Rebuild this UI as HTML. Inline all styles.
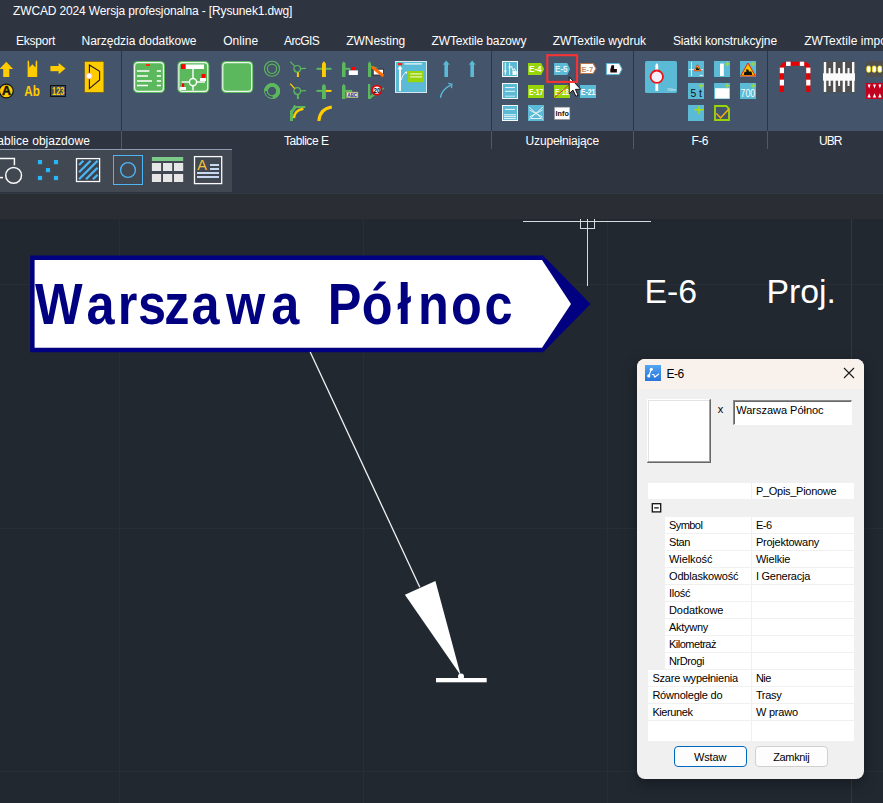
<!DOCTYPE html>
<html lang="pl">
<head>
<meta charset="utf-8">
<title>ZWCAD 2024 Wersja profesjonalna - [Rysunek1.dwg]</title>
<style>
html,body{margin:0;padding:0;}
body{width:883px;height:803px;overflow:hidden;position:relative;background:#212830;font-family:"Liberation Sans",sans-serif;}
.abs{position:absolute;}
.tx{position:absolute;white-space:pre;font-family:"Liberation Sans",sans-serif;}
#titlebar{left:0;top:0;width:883px;height:51px;background:#2f3540;}
#ribbon{left:0;top:51px;width:883px;height:80px;background:#44546a;}
#labels{left:0;top:131px;width:883px;height:63px;background:#2f3540;border-bottom:1px solid #303843;box-sizing:border-box;}
#strip{left:0;top:194px;width:883px;height:25px;background:#2a2d33;}
#toolbar{left:0;top:149px;width:232px;height:43px;background:#414852;border-top:1px solid #8d9cb2;box-sizing:border-box;}
.sep{position:absolute;top:51px;width:1px;height:98px;background:#2f3540;}
.sep2{position:absolute;top:131px;width:1px;height:18px;background:#4a5a70;}
#canvas{left:0;top:219px;width:883px;height:584px;background:#212830;overflow:hidden;}
#dialog{left:637px;top:359px;width:227px;height:420px;background:#f0f0f0;border-radius:8px;overflow:hidden;box-shadow:0 4px 14px rgba(0,0,0,.35);}
#dtitle{left:0;top:0;width:227px;height:30px;background:#f9f2ec;}
.row{position:absolute;background:#fff;height:16px;}
.btn{position:absolute;box-sizing:border-box;border-radius:4px;background:#fdfdfd;}
</style>
</head>
<body>
<div id="titlebar" class="abs"></div>
<div id="ribbon" class="abs"></div>
<div id="labels" class="abs"></div>
<div id="strip" class="abs"></div>
<div class="sep" style="left:121px"></div><div class="sep" style="left:491px"></div><div class="sep" style="left:633px"></div><div class="sep" style="left:767px"></div>
<div class="sep2" style="left:121px"></div><div class="sep2" style="left:491px"></div><div class="sep2" style="left:633px"></div><div class="sep2" style="left:767px"></div>
<div id="toolbar" class="abs"></div>
<div id="canvas" class="abs">
<svg class="abs" style="left:0;top:0" width="883" height="584" viewBox="0 219 883 584">
<g stroke="#272e37" stroke-width="1" shape-rendering="crispEdges">
<line x1="119.5" y1="218" x2="119.5" y2="803"/><line x1="363.5" y1="218" x2="363.5" y2="803"/><line x1="607.5" y1="218" x2="607.5" y2="803"/>
<line x1="0" y1="284.5" x2="883" y2="284.5"/><line x1="0" y1="528.5" x2="883" y2="528.5"/><line x1="0" y1="771.5" x2="883" y2="771.5"/>
<line x1="851.5" y1="218" x2="851.5" y2="803" stroke="#303844"/>
</g>
<g stroke="#d8dadd" stroke-width="1" fill="none" shape-rendering="crispEdges">
<line x1="523" y1="221.5" x2="651" y2="221.5"/><line x1="587.5" y1="218" x2="587.5" y2="285.5"/>
<rect x="580.5" y="214.5" width="14" height="14"/>
</g>
<polygon points="30.2,255.5 543,255.5 590.6,303.9 543,352.2 30.2,352.2" fill="#000080"/>
<polygon points="34.6,260.1 542,260.1 571,303.9 542,347.8 34.6,347.8" fill="#ffffff"/>
<text transform="scale(0.88,1)" x="39.8 98.2 133.8 156.7 186.8 217.7 256.7 308.1 358.0 372.4 411.1 451.4 475.1 512.4 550.7" y="324" font-family="Liberation Sans, sans-serif" font-weight="700" font-size="57.3" fill="#000080">Warszawa Północ</text>
<line x1="310.2" y1="352" x2="419.8" y2="587.2" stroke="#f2f2f2" stroke-width="1.3"/>
<polygon points="404.9,594.8 435.4,580.9 460.8,675.6" fill="#ffffff"/>
<circle cx="461" cy="676.4" r="3" fill="#ffffff"/>
<rect x="436" y="678" width="50.7" height="4.3" fill="#ffffff"/>

</svg>
</div>
<svg class="abs" style="left:0;top:0" width="883" height="220" viewBox="0 0 883 220">
<defs>
<g id="gsign"><rect x="0" y="0" width="32" height="32" rx="4.5" fill="#5cb85c"/><rect x="1.6" y="1.6" width="28.8" height="28.8" rx="3.4" fill="none" stroke="#eef8ee" stroke-width="1.2"/></g>
<g id="plus" stroke="#aadc10" stroke-width="1.25"><line x1="-2.5" y1="0" x2="2.5" y2="0"/><line x1="0" y1="-2.5" x2="0" y2="2.5"/></g>
</defs>
<!-- ===== Tablice objazdowe ===== -->
<g fill="#ffcc00">
<polygon points="6.3,61.7 13.1,69 9.3,69 9.3,77 3.2,77 3.2,69 -0.5,69"/>
<polygon points="27.6,60.7 29,60.7 29.4,67.6 32.4,64.3 35.4,67.6 35.8,60.7 37.2,60.7 37.2,77 27.6,77"/>
<rect x="50.4" y="66" width="9" height="5.2"/><polygon points="58.6,63 65.5,68.6 58.6,74.2"/>
<rect x="84.6" y="61.5" width="19.3" height="30.8" stroke="#6b5a10" stroke-width="0.6"/>
</g>
<polygon points="89.4,65 99.6,71.2 99.6,80 89.4,88.6" fill="none" stroke="#1a1a1a" stroke-width="1.1"/>
<circle cx="89.2" cy="76" r="2.9" fill="#fff" stroke="#ffb090" stroke-width="0.7"/>
<circle cx="6.3" cy="91" r="6.9" fill="#ffcc00" stroke="#111" stroke-width="1.2"/>
<text x="6.5" y="95.3" font-family="Liberation Sans, sans-serif" font-size="12.4" font-weight="700" fill="#111" stroke="#111" stroke-width="0.5" text-anchor="middle">A</text>
<text x="24.3" y="96.2" font-family="Liberation Sans, sans-serif" font-size="15" font-weight="700" fill="#ffcc00" textLength="15.6" lengthAdjust="spacingAndGlyphs">Ab</text>
<rect x="50.5" y="85.5" width="15" height="11" fill="#3d4a60" stroke="#111" stroke-width="1"/>
<text x="52" y="95.3" font-family="Liberation Sans, sans-serif" font-size="10.6" font-weight="700" fill="#ffcc00" textLength="12.4" lengthAdjust="spacingAndGlyphs">123</text>
<!-- ===== Tablice E ===== -->
<use href="#gsign" x="133" y="61"/>
<g stroke="#fff" stroke-width="1.5"><line x1="137" y1="71" x2="149.3" y2="71"/><line x1="137" y1="76" x2="148" y2="76"/><line x1="137" y1="81" x2="152" y2="81"/><line x1="137" y1="85.5" x2="148" y2="85.5"/>
<line x1="156.8" y1="71" x2="161" y2="71"/><line x1="156.8" y1="76" x2="161" y2="76"/><line x1="156.8" y1="81" x2="161" y2="81"/><line x1="156.8" y1="85.5" x2="161" y2="85.5"/></g>
<rect x="146" y="64" width="4" height="2" rx="0.6" fill="#ff2a00"/>
<use href="#gsign" x="177.3" y="61"/>
<rect x="186" y="64.5" width="18" height="4.5" fill="#fff"/><rect x="181" y="64.2" width="4.2" height="4.8" fill="#f00"/>
<g stroke="#fff" stroke-width="1.4" fill="none"><line x1="193" y1="69" x2="193" y2="78.3"/><line x1="193" y1="86" x2="193" y2="90.5"/><line x1="181.5" y1="82" x2="189" y2="82"/><line x1="197" y1="82" x2="205" y2="82"/><circle cx="193" cy="82.1" r="3.6"/></g>
<rect x="201.6" y="74" width="4" height="4" fill="#f00"/><rect x="200" y="78" width="6" height="3" fill="#fff"/>
<rect x="182" y="83.4" width="2.2" height="3.6" fill="#f00"/><rect x="180" y="87" width="6" height="3" fill="#fff"/>
<use href="#gsign" x="221.2" y="61"/>
<g fill="none" stroke="#5cb85c">
<circle cx="272" cy="68.8" r="7.5" stroke-width="1.1"/><circle cx="272" cy="68.8" r="4.7" stroke-width="1.1"/>
<circle cx="272.1" cy="91" r="7.5" stroke-width="1"/><circle cx="272.1" cy="91" r="4.7" stroke-width="1.1"/><path d="M266,91 A6.1,6.1 0 1 1 272.6,97.1" stroke-width="3.8"/>
</g>
<!-- mini roundabouts -->
<g fill="none" stroke="#5cb85c" stroke-width="1.2">
<circle cx="297.2" cy="68.8" r="3.3"/><line x1="294.8" y1="66.4" x2="290.2" y2="61.6"/><line x1="300.5" y1="68.7" x2="306" y2="68.4"/>
<circle cx="297.2" cy="91" r="3.3"/><line x1="300.5" y1="90.9" x2="306" y2="90.6"/>
</g>
<line x1="297.9" y1="72.3" x2="297.9" y2="77" stroke="#ffcc00" stroke-width="2"/>
<line x1="294.8" y1="88.6" x2="290.2" y2="83.8" stroke="#ffcc00" stroke-width="1.3"/>
<line x1="297.9" y1="94.5" x2="297.9" y2="99" stroke="#5cb85c" stroke-width="2"/>
<path d="M295.2,70.5 l1.2,1.2 M294.2,69 l2.2,2.2" stroke="#5cb85c" stroke-width="0.6"/>
<path d="M295.2,92.7 l1.2,1.2 M294.2,91.2 l2.2,2.2" stroke="#5cb85c" stroke-width="0.6"/>
<!-- curve icons -->
<polygon points="290,121 290,111 292.6,108.2 294,105 295.3,105 295.3,105.9 305.4,105.9 305.4,107.9 296.2,107.9 293,112.6 293,121" fill="#5cb85c"/>
<path d="M293.9,118.2 Q294.4,110.4 303.4,108.8" fill="none" stroke="#ffcc00" stroke-width="2.4"/>
<path d="M318.9,121 Q319.6,109 331.8,107.1" fill="none" stroke="#ffcc00" stroke-width="3"/>
<!-- crosses -->
<line x1="316.5" y1="68.8" x2="331.5" y2="68.8" stroke="#5cb85c" stroke-width="2"/>
<polygon points="322,63.4 323.95,61.3 325.9,63.4 325.9,77 322,77" fill="#ffcc00"/>
<line x1="316.5" y1="90.9" x2="322.5" y2="90.9" stroke="#5cb85c" stroke-width="2"/>
<line x1="325.5" y1="90.9" x2="331.5" y2="90.9" stroke="#ffcc00" stroke-width="2"/>
<polygon points="322,85.9 323.95,83.8 325.9,85.9 325.9,99 322,99" fill="#5cb85c"/>
<!-- T icons -->
<polygon points="342,63.4 343.75,61.3 345.5,63.4 345.5,77 342,77" fill="#5cb85c"/>
<line x1="345" y1="68.8" x2="350.3" y2="68.8" stroke="#5cb85c" stroke-width="2"/>
<rect x="351.3" y="67" width="4.4" height="3.3" fill="#f00"/><rect x="348.8" y="70.4" width="9.1" height="4.6" fill="#fff"/>
<polygon points="342,85.9 343.75,83.8 345.5,85.9 345.5,99 342,99" fill="#5cb85c"/>
<line x1="345" y1="90.9" x2="352" y2="90.9" stroke="#5cb85c" stroke-width="2"/>
<rect x="346.6" y="92.1" width="11.3" height="5.6" fill="#e6e2a0" stroke="#a8a870" stroke-width="0.6"/>
<text x="347.6" y="97" font-family="Liberation Sans, sans-serif" font-size="5.6" font-weight="700" fill="#1428c8" textLength="9.4" lengthAdjust="spacingAndGlyphs">ABC</text>
<polygon points="368,63.4 369.5,61.3 371,63.4 371,77 368,77" fill="#5cb85c"/>
<line x1="371" y1="66" x2="378" y2="68.6" stroke="#5cb85c" stroke-width="1.1"/>
<rect x="373.2" y="69.2" width="10.2" height="5.8" fill="#fff" stroke="#222" stroke-width="0.8"/>
<line x1="371.9" y1="66.9" x2="383.5" y2="76" stroke="#ff6a00" stroke-width="3"/>
<polygon points="368,84 370.2,84 370.2,95.8 372.6,93.8 373.2,94.8 370.2,99 368,99" fill="#5cb85c"/>
<line x1="369.6" y1="98.6" x2="384" y2="88" stroke="#5cb85c" stroke-width="1.2"/>
<circle cx="376.9" cy="90.1" r="4.55" fill="#fff" stroke="#e80000" stroke-width="1.8"/>
<text x="373.5" y="92.5" font-family="Liberation Sans, sans-serif" font-size="6.6" font-weight="700" fill="#000" textLength="6.9" lengthAdjust="spacingAndGlyphs">20</text>
<!-- big blue icon -->
<rect x="395.5" y="61.5" width="31" height="31" fill="#5bbad5" stroke="#d4e8ef" stroke-width="1"/>
<rect x="398" y="63" width="4.2" height="2.2" fill="#f20"/>
<line x1="404.3" y1="63.9" x2="422" y2="63.9" stroke="#fff" stroke-width="1.1"/>
<line x1="400" y1="68" x2="400" y2="91" stroke="#fff" stroke-width="2"/><polygon points="400,65.4 402.5,69.2 397.5,69.2" fill="#fff"/>
<path d="M401.2,80 Q402,74.5 406,72.3" fill="none" stroke="#fff" stroke-width="0.8"/><polygon points="407.2,71.4 406.6,74 404.6,72" fill="#fff"/>
<rect x="408" y="71" width="16" height="11.2" fill="#98d40a"/>
<line x1="410.2" y1="73.9" x2="422" y2="73.9" stroke="#eaf6c8" stroke-width="1.2"/><line x1="410.2" y1="76.9" x2="422" y2="76.9" stroke="#eaf6c8" stroke-width="1.2"/>
<!-- blue arrows -->
<g fill="#5bbad5">
<polygon points="446.2,60.6 449.7,64.8 448,64.6 448,77 444.4,77 444.4,64.6 442.7,64.8"/>
<polygon points="472.2,60.6 475.7,64.8 474,64.6 474,77 470.4,77 470.4,64.6 468.7,64.8"/>
</g>
<path d="M440.4,97.8 Q441.5,89.5 451,84.8" fill="none" stroke="#5bbad5" stroke-width="1.3"/>
<path d="M448.2,83.4 L452,84.2 L451.4,88.2" fill="none" stroke="#5bbad5" stroke-width="1.2"/>
<!-- ===== Uzupełniające ===== -->
<g fill="#5bbad5" stroke="#f4fafc" stroke-width="1">
<rect x="502.5" y="61.5" width="15" height="15"/><rect x="502.5" y="83.5" width="15" height="15"/><rect x="502.5" y="105.5" width="15" height="15"/>
</g>
<g stroke="#fff" stroke-width="0.9" fill="none">
<line x1="505.3" y1="63" x2="505.3" y2="75"/><line x1="509.6" y1="63" x2="509.6" y2="75"/><path d="M511.5,66 L513,70.5 L514.5,68.5 L516.5,73.5"/>
<line x1="505" y1="87.6" x2="515" y2="87.6"/><line x1="505" y1="91.3" x2="515" y2="91.3"/><line x1="505" y1="96.2" x2="515" y2="96.2" stroke-opacity="0.75"/>
<line x1="505" y1="109.4" x2="515" y2="109.4"/><line x1="504" y1="114.8" x2="516" y2="114.8"/><line x1="504" y1="116.7" x2="516" y2="116.7"/><line x1="504" y1="118.6" x2="516" y2="118.6"/>
</g>
<rect x="504.5" y="70" width="1.8" height="2.4" fill="#fff"/><rect x="508.7" y="66" width="1.8" height="2.4" fill="#fff"/><rect x="512.5" y="71" width="4" height="4" fill="#fff"/>
<polygon points="528,63 541.2,63 544.2,69 541.2,75 528,75" fill="#98d40a"/>
<text x="529" y="72" font-family="Liberation Sans, sans-serif" font-size="8.2" font-weight="700" fill="#fff" textLength="12.6" lengthAdjust="spacingAndGlyphs">E-4</text>
<rect x="528" y="85" width="16" height="13" fill="#98d40a"/>
<text x="529" y="94.6" font-family="Liberation Sans, sans-serif" font-size="8.2" font-weight="700" fill="#fff" textLength="14.2" lengthAdjust="spacingAndGlyphs">E-17</text>
<rect x="528" y="105" width="16" height="16" fill="#5bbad5"/>
<g stroke="#eef8fb" stroke-width="0.9" fill="none"><path d="M529,107 L543,119.5 M543,107 L529,119.5 M529.5,110 L542.5,117 M542.5,110 L529.5,117 M531,118.5 H541"/></g>
<polygon points="554,63 567.2,63 570.2,69 567.2,75 554,75" fill="#5bbad5"/>
<text x="555" y="72" font-family="Liberation Sans, sans-serif" font-size="8.2" font-weight="700" fill="#e4f3f8" textLength="12.6" lengthAdjust="spacingAndGlyphs">E-5</text>
<rect x="554" y="85" width="16" height="13" fill="#98d40a"/>
<text x="555" y="94.6" font-family="Liberation Sans, sans-serif" font-size="8.2" font-weight="700" fill="#fff" textLength="14.2" lengthAdjust="spacingAndGlyphs">E-18</text>
<line x1="554.5" y1="97.6" x2="568.5" y2="85.4" stroke="#f21a1a" stroke-width="0.9"/>
<rect x="554.6" y="107.2" width="15.2" height="12.2" fill="#fff" stroke="#9a9a9a" stroke-width="0.6"/>
<text x="555.6" y="116.4" font-family="Liberation Sans, sans-serif" font-size="8" font-weight="700" fill="#111" textLength="13.2" lengthAdjust="spacingAndGlyphs">Info</text>
<polygon points="580.5,63.5 593.2,63.5 596,68.5 593.2,73.5 580.5,73.5" fill="#fff" stroke="#b8764a" stroke-width="1.1"/>
<text x="581.6" y="71.6" font-family="Liberation Sans, sans-serif" font-size="8" font-weight="700" fill="#c08a60" textLength="11.6" lengthAdjust="spacingAndGlyphs">E-7</text>
<rect x="580" y="85" width="16" height="13" fill="#5bbad5"/>
<text x="580.8" y="94.6" font-family="Liberation Sans, sans-serif" font-size="8.2" font-weight="700" fill="#fff" textLength="14.6" lengthAdjust="spacingAndGlyphs">E-21</text>
<polygon points="606.4,63.5 619.2,63.5 622,69 619.2,74.6 606.4,74.6" fill="#fff" stroke="#5bbad5" stroke-width="1"/>
<path d="M611.5,65.2 h2.6 v3.8 h2.8 v3.6 h-6.6 v-3 z" fill="#1a0808"/>
<path d="M569.2,76.9 L569.2,93.7 L573,90.1 L575.9,96.3 L578.1,95.3 L575.4,89.4 L580.7,89.2 Z" fill="#fff" stroke="#111" stroke-width="1" stroke-linejoin="miter"/>
<rect x="547.3" y="55.2" width="29.8" height="26.7" fill="none" stroke="#f93234" stroke-width="2.1"/>
<!-- ===== F-6 ===== -->
<rect x="645" y="61" width="32" height="32" rx="1.5" fill="#5bbad5"/>
<polygon points="655.4,65 656.8,63 658.2,65 658.2,91 655.4,91" fill="#fff"/>
<circle cx="656.8" cy="76.7" r="6.2" fill="#f4f0fb" stroke="#ee1414" stroke-width="1.8"/>
<text x="667" y="91" font-family="Liberation Sans, sans-serif" font-size="3.6" fill="#eaf6fa" textLength="8.6" lengthAdjust="spacingAndGlyphs">700m</text>
<g fill="#5bbad5">
<rect x="688" y="61" width="16" height="16"/><rect x="714" y="61" width="16" height="16"/><rect x="740" y="61" width="16" height="16"/>
<rect x="688" y="83" width="16" height="16"/><rect x="714" y="83" width="16" height="16"/><rect x="740" y="83" width="16" height="16"/>
<rect x="688" y="105" width="16" height="16"/>
</g>
<g stroke="#fff" stroke-width="0.8"><line x1="691.5" y1="62" x2="691.5" y2="76"/><line x1="689" y1="69.6" x2="703" y2="69.6"/><line x1="699.5" y1="75.4" x2="703" y2="75.4"/></g>
<polygon points="697.5,64.6 701,70.8 694,70.8" fill="#ffc400" stroke="#ee2200" stroke-width="0.7"/><path d="M695.8,70 h3.6 v-1.6 h-1.6 v-1.2 h-1.2 z" fill="#111"/>
<rect x="720" y="63.6" width="3.8" height="12.4" fill="#fff"/>
<use href="#plus" x="727.3" y="64"/>
<polygon points="748,63 755.4,76 740.6,76" fill="#ffc400" stroke="#ee2200" stroke-width="1"/>
<path d="M743.6,75 h8.8 l-1,-3.6 h-2.4 l-0.8,-2 h-2.4 l0.8,2.4 h-2 z" fill="#111"/>
<use href="#plus" x="753.3" y="64"/>
<text x="690.4" y="97" font-family="Liberation Sans, sans-serif" font-size="11" fill="#111" textLength="11.4" lengthAdjust="spacingAndGlyphs">5 t</text>
<use href="#plus" x="701.3" y="85.8"/>
<rect x="715" y="88.2" width="14.4" height="10.3" fill="#fff"/>
<use href="#plus" x="727.3" y="85.8"/>
<text x="740.6" y="97.2" font-family="Liberation Sans, sans-serif" font-size="10.6" fill="#fff" textLength="14.6" lengthAdjust="spacingAndGlyphs">700</text>
<use href="#plus" x="753.3" y="85.8"/>
<g stroke="#aadc10" stroke-width="1.6"><line x1="694.6" y1="109.7" x2="703.4" y2="109.7"/><line x1="699" y1="106" x2="699" y2="114"/></g>
<polygon points="715,106 726.4,106 729,108.8 729,120 715,120" fill="none" stroke="#98d40a" stroke-width="1.9"/>
<polyline points="716.4,113.4 720.6,118 728.6,109.2" fill="none" stroke="#ffb400" stroke-width="1.4"/>
<!-- ===== UBR ===== -->
<path d="M781.9,92 V69.2 Q781.9,63.8 787.3,63.8 H802.9 Q808.3,63.8 808.3,69.2 V92" fill="none" stroke="#e60000" stroke-width="4.1"/>
<g fill="#fff">
<rect x="779.8" y="67.6" width="4.2" height="5.6"/><rect x="779.8" y="79.7" width="4.2" height="5.8"/>
<rect x="806.2" y="67.6" width="4.2" height="5.6"/><rect x="806.2" y="79.7" width="4.2" height="5.8"/>
<rect x="786" y="61.7" width="4.6" height="4.2"/><rect x="799.8" y="61.7" width="4.4" height="4.2"/>
</g>
<rect x="823" y="61.3" width="32" height="31.2" fill="#4f4f4f"/>
<g fill="#fafafa">
<rect x="823" y="73.3" width="32" height="7.4"/>
<rect x="823.8" y="62" width="2.4" height="30"/><rect x="833.2" y="62" width="2.4" height="30"/><rect x="842.7" y="62" width="2.4" height="30"/><rect x="852" y="62" width="2.4" height="30"/>
<rect x="828.6" y="68" width="2" height="18"/><rect x="838.1" y="68" width="2" height="18"/><rect x="847.5" y="68" width="2" height="18"/>
</g>
<rect x="866" y="61" width="17" height="16" fill="#4f4f4f"/>
<g fill="#fff" stroke="#ffe800" stroke-width="0.8"><rect x="866.8" y="66" width="3.7" height="6.2" rx="1.5"/><rect x="872.3" y="66" width="3.7" height="6.2" rx="1.5"/><rect x="877.9" y="66" width="3.7" height="6.2" rx="1.5"/></g>
<rect x="866" y="83" width="17" height="16" fill="#c0001e"/>
<g fill="#fff"><polygon points="867.6,84.4 870.6,84.4 869.1,88.4"/><polygon points="873,84.4 876,84.4 874.5,88.4"/><polygon points="878.4,84.4 881.4,84.4 879.9,88.4"/>
<polygon points="867.4,97.6 870.8,97.6 869.1,93.2"/><polygon points="872.8,97.6 876.2,97.6 874.5,93.2"/><polygon points="878.2,97.6 881.6,97.6 879.9,93.2"/></g>
<!-- ===== Toolbar icons ===== -->
<g fill="none" stroke="#fafafa" stroke-width="1.5"><circle cx="13.6" cy="175.4" r="7.9"/><path d="M-1,158.5 H14.4 V165.2"/><line x1="-1" y1="177.6" x2="3" y2="177.6"/></g>
<g fill="#29b6f6"><rect x="37.9" y="160" width="4.2" height="4.2"/><rect x="53.9" y="160" width="4.2" height="4.2"/><rect x="45.9" y="168" width="4.2" height="4.2"/><rect x="37.9" y="175.9" width="4.2" height="4.2"/><rect x="53.9" y="175.9" width="4.2" height="4.2"/></g>
<rect x="76.5" y="158.6" width="23.1" height="22.9" fill="#3b424c" stroke="#fafafa" stroke-width="1.3"/>
<g stroke="#4db5f5" stroke-width="2.3" stroke-linecap="butt"><line x1="79" y1="165" x2="83.3" y2="160.7"/><line x1="79" y1="172.3" x2="90.6" y2="160.7"/><line x1="79" y1="179.3" x2="97.6" y2="160.7"/><line x1="86" y1="179.3" x2="97.6" y2="167.7"/><line x1="93" y1="179.3" x2="97.6" y2="174.7"/></g>
<rect x="113.5" y="155.5" width="29" height="29" fill="none" stroke="#4db5f5" stroke-width="1"/>
<circle cx="128" cy="170" r="7.4" fill="none" stroke="#4db5f5" stroke-width="1.4"/>
<rect x="151.9" y="157" width="31.3" height="4" fill="#7dc98a"/>
<g fill="#e6e6e6"><rect x="151.9" y="163" width="9.2" height="8"/><rect x="163" y="163" width="9.2" height="8"/><rect x="174" y="163" width="9.2" height="8"/><rect x="151.9" y="174" width="9.2" height="8"/><rect x="163" y="174" width="9.2" height="8"/><rect x="174" y="174" width="9.2" height="8"/></g>
<rect x="194.5" y="156.6" width="27.2" height="27" fill="none" stroke="#fafafa" stroke-width="1.3"/>
<text x="197.3" y="169.9" font-family="Liberation Sans, sans-serif" font-size="14.6" fill="#f5c03a">A</text>
<g fill="#c8d8f0"><rect x="210" y="164" width="9" height="2"/><rect x="210" y="168" width="9" height="2"/><rect x="197" y="172" width="22" height="2"/><rect x="197" y="176" width="22" height="2"/></g>

</svg>
<div id="dialog" class="abs">
<div id="dtitle" class="abs"></div>
<svg class="abs" style="left:8px;top:6px" width="16" height="16" viewBox="0 0 16 16"><defs><linearGradient id="gi" x1="0" y1="0" x2="0" y2="1"><stop offset="0" stop-color="#55a6f2"/><stop offset="0.5" stop-color="#3a8be6"/><stop offset="1" stop-color="#2a76dc"/></linearGradient></defs><rect width="16" height="16" fill="url(#gi)"/><path d="M6.3 4.3 L3.8 10.9 M7.2 9.5 L8.8 9.5 L9.6 12.2 L13.7 9" stroke="#fff" stroke-width="1.1" fill="none" stroke-linecap="round" stroke-linejoin="round"/><circle cx="6.3" cy="4.3" r="1.5" fill="#fff"/><circle cx="3.8" cy="10.9" r="1.6" fill="#fff"/></svg>
<svg class="abs" style="left:206px;top:8px" width="12" height="12" viewBox="0 0 12 12"><path d="M1 1 L11 11 M11 1 L1 11" stroke="#1a1a1a" stroke-width="1.1" fill="none"/></svg>
<div class="abs" style="left:10px;top:40px;width:64px;height:64px;box-sizing:border-box;background:#fff;border-style:solid;border-width:1px 2px 2px 1px;border-color:#fff #696969 #696969 #fff;"></div>
<div class="abs" style="left:11px;top:41px;width:61px;height:1px;background:#e3e3e3"></div><div class="abs" style="left:11px;top:41px;width:1px;height:61px;background:#e3e3e3"></div><div class="abs" style="left:72px;top:41px;width:1px;height:62px;background:#a0a0a0"></div><div class="abs" style="left:11px;top:102px;width:62px;height:1px;background:#a0a0a0"></div>
<div class="abs" style="left:96px;top:41px;width:119px;height:25px;box-sizing:border-box;background:#fff;border-style:solid;border-width:2px 1px 1px 2px;border-color:#8a8a8a #fff #fff #8a8a8a;"></div>
<div class="abs" style="left:97px;top:42px;width:117px;height:1px;background:#696969"></div><div class="abs" style="left:97px;top:42px;width:1px;height:23px;background:#696969"></div>
<!-- property grid -->
<div class="row" style="left:11px;top:124px;width:103px"></div><div class="row" style="left:115px;top:124px;width:102px"></div>
<svg class="abs" style="left:14px;top:144px" width="12" height="12" viewBox="0 0 12 12"><rect x="1.3" y="0.7" width="8.4" height="8.2" fill="#fff" stroke="#111" stroke-width="1.3"/><line x1="3.2" y1="4.8" x2="7.8" y2="4.8" stroke="#111" stroke-width="1.3"/></svg>
<div class="row" style="left:28px;top:158px;width:86px"></div><div class="row" style="left:115px;top:158px;width:102px"></div>
<div class="row" style="left:28px;top:175px;width:86px"></div><div class="row" style="left:115px;top:175px;width:102px"></div>
<div class="row" style="left:28px;top:192px;width:86px"></div><div class="row" style="left:115px;top:192px;width:102px"></div>
<div class="row" style="left:28px;top:209px;width:86px"></div><div class="row" style="left:115px;top:209px;width:102px"></div>
<div class="row" style="left:28px;top:226px;width:86px"></div><div class="row" style="left:115px;top:226px;width:102px"></div>
<div class="row" style="left:28px;top:243px;width:86px"></div><div class="row" style="left:115px;top:243px;width:102px"></div>
<div class="row" style="left:28px;top:260px;width:86px"></div><div class="row" style="left:115px;top:260px;width:102px"></div>
<div class="row" style="left:28px;top:277px;width:86px"></div><div class="row" style="left:115px;top:277px;width:102px"></div>
<div class="row" style="left:28px;top:294px;width:86px"></div><div class="row" style="left:115px;top:294px;width:102px"></div>
<div class="row" style="left:11px;top:311px;width:103px"></div><div class="row" style="left:115px;top:311px;width:102px"></div>
<div class="row" style="left:11px;top:328px;width:103px"></div><div class="row" style="left:115px;top:328px;width:102px"></div>
<div class="row" style="left:11px;top:345px;width:103px"></div><div class="row" style="left:115px;top:345px;width:102px"></div>
<div class="row" style="left:11px;top:362px;width:103px;height:20px"></div><div class="row" style="left:115px;top:362px;width:102px;height:20px"></div>
<div class="btn" style="left:37px;top:387px;width:73px;height:21px;border:1.5px solid #0067c0;"></div>
<div class="btn" style="left:118px;top:387px;width:73px;height:21px;border:1px solid #d0d0d0;"></div>

</div>
<span class="tx" style="left:13px;top:4.84px;font-size:12px;line-height:12px;color:#fff;letter-spacing:-0.138px;">ZWCAD 2024 Wersja profesjonalna - [Rysunek1.dwg]</span>
<span class="tx" style="left:16px;top:34.84px;font-size:12px;line-height:12px;color:#fff;letter-spacing:-0.241px;">Eksport</span>
<span class="tx" style="left:81.5px;top:34.84px;font-size:12px;line-height:12px;color:#fff;letter-spacing:-0.021px;">Narzędzia dodatkowe</span>
<span class="tx" style="left:223.2px;top:34.84px;font-size:12px;line-height:12px;color:#fff;letter-spacing:0.052px;">Online</span>
<span class="tx" style="left:284px;top:34.84px;font-size:12px;line-height:12px;color:#fff;letter-spacing:-0.579px;">ArcGIS</span>
<span class="tx" style="left:346.2px;top:34.84px;font-size:12px;line-height:12px;color:#fff;letter-spacing:-0.038px;">ZWNesting</span>
<span class="tx" style="left:431.5px;top:34.84px;font-size:12px;line-height:12px;color:#fff;letter-spacing:-0.119px;">ZWTextile bazowy</span>
<span class="tx" style="left:552.8px;top:34.84px;font-size:12px;line-height:12px;color:#fff;letter-spacing:-0.051px;">ZWTextile wydruk</span>
<span class="tx" style="left:672.9px;top:34.84px;font-size:12px;line-height:12px;color:#fff;letter-spacing:-0.097px;">Siatki konstrukcyjne</span>
<span class="tx" style="left:804.2px;top:34.84px;font-size:12px;line-height:12px;color:#fff;letter-spacing:0.060px;">ZWTextile import</span>
<span class="tx" style="left:-8.8px;top:134.84px;font-size:12px;line-height:12px;color:#fff;letter-spacing:0.038px;">Tablice objazdowe</span>
<span class="tx" style="left:284px;top:134.84px;font-size:12px;line-height:12px;color:#fff;letter-spacing:-0.467px;">Tablice E</span>
<span class="tx" style="left:525.5px;top:134.84px;font-size:12px;line-height:12px;color:#fff;letter-spacing:-0.145px;">Uzupełniające</span>
<span class="tx" style="left:691.5px;top:134.84px;font-size:12px;line-height:12px;color:#fff;letter-spacing:-0.500px;">F-6</span>
<span class="tx" style="left:819px;top:134.84px;font-size:12px;line-height:12px;color:#fff;letter-spacing:-0.948px;">UBR</span>
<span class="tx" style="left:644.5px;top:275.49px;font-size:33.8px;line-height:33.8px;color:#fff;">E-6</span>
<span class="tx" style="left:766.5px;top:275.49px;font-size:33.8px;line-height:33.8px;color:#fff;">Proj.</span>
<span class="tx" style="left:669px;top:519.79px;font-size:11px;line-height:11px;color:#000;letter-spacing:-0.565px;">Symbol</span>
<span class="tx" style="left:669px;top:536.79px;font-size:11px;line-height:11px;color:#000;letter-spacing:-0.410px;">Stan</span>
<span class="tx" style="left:669px;top:553.79px;font-size:11px;line-height:11px;color:#000;letter-spacing:-0.077px;">Wielkość</span>
<span class="tx" style="left:669px;top:570.79px;font-size:11px;line-height:11px;color:#000;letter-spacing:-0.179px;">Odblaskowość</span>
<span class="tx" style="left:669px;top:587.79px;font-size:11px;line-height:11px;color:#000;letter-spacing:-0.285px;">Ilość</span>
<span class="tx" style="left:669px;top:604.79px;font-size:11px;line-height:11px;color:#000;letter-spacing:-0.072px;">Dodatkowe</span>
<span class="tx" style="left:669px;top:621.79px;font-size:11px;line-height:11px;color:#000;letter-spacing:-0.281px;">Aktywny</span>
<span class="tx" style="left:669px;top:638.79px;font-size:11px;line-height:11px;color:#000;letter-spacing:-0.497px;">Kilometraż</span>
<span class="tx" style="left:669px;top:655.79px;font-size:11px;line-height:11px;color:#000;letter-spacing:-0.415px;">NrDrogi</span>
<span class="tx" style="left:652.4px;top:672.79px;font-size:11px;line-height:11px;color:#000;letter-spacing:-0.217px;">Szare wypełnienia</span>
<span class="tx" style="left:652.4px;top:689.79px;font-size:11px;line-height:11px;color:#000;letter-spacing:-0.214px;">Równolegle do</span>
<span class="tx" style="left:652.4px;top:706.79px;font-size:11px;line-height:11px;color:#000;letter-spacing:-0.403px;">Kierunek</span>
<span class="tx" style="left:755.9px;top:485.79px;font-size:11px;line-height:11px;color:#000;letter-spacing:-0.285px;">P_Opis_Pionowe</span>
<span class="tx" style="left:755.9px;top:519.79px;font-size:11px;line-height:11px;color:#000;letter-spacing:-0.442px;">E-6</span>
<span class="tx" style="left:755.9px;top:536.79px;font-size:11px;line-height:11px;color:#000;letter-spacing:-0.237px;">Projektowany</span>
<span class="tx" style="left:755.9px;top:553.79px;font-size:11px;line-height:11px;color:#000;letter-spacing:-0.150px;">Wielkie</span>
<span class="tx" style="left:755.9px;top:570.79px;font-size:11px;line-height:11px;color:#000;letter-spacing:-0.243px;">I Generacja</span>
<span class="tx" style="left:755.9px;top:672.79px;font-size:11px;line-height:11px;color:#000;letter-spacing:-0.572px;">Nie</span>
<span class="tx" style="left:755.9px;top:689.79px;font-size:11px;line-height:11px;color:#000;letter-spacing:-0.339px;">Trasy</span>
<span class="tx" style="left:755.9px;top:706.79px;font-size:11px;line-height:11px;color:#000;letter-spacing:-0.201px;">W prawo</span>
<span class="tx" style="left:736.3px;top:404.99px;font-size:11px;line-height:11px;color:#000;letter-spacing:-0.022px;">Warszawa Północ</span>
<span class="tx" style="left:717.8px;top:404.09px;font-size:11px;line-height:11px;color:#000;letter-spacing:0.100px;">x</span>
<span class="tx" style="left:666.5px;top:367.84px;font-size:12px;line-height:12px;color:#000;letter-spacing:-0.562px;">E-6</span>
<span class="tx" style="left:694px;top:751.69px;font-size:11px;line-height:11px;color:#000;letter-spacing:-0.140px;">Wstaw</span>
<span class="tx" style="left:773.2px;top:751.69px;font-size:11px;line-height:11px;color:#000;letter-spacing:-0.345px;">Zamknij</span>
<!--OVER-->
</body>
</html>
